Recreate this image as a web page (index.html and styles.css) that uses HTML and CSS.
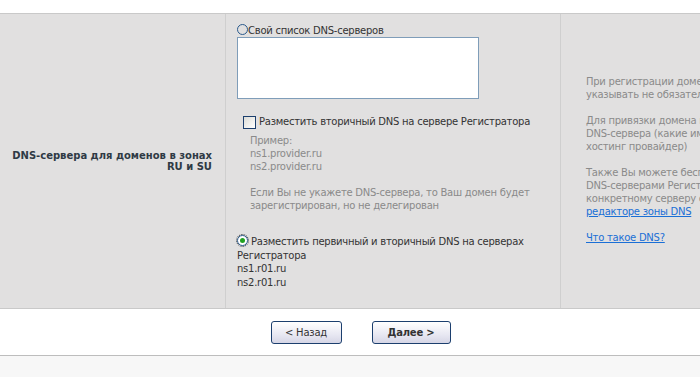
FILE: index.html
```
<!DOCTYPE html>
<html lang="ru">
<head>
<meta charset="utf-8">
<link rel="stylesheet" href="styles.css">
</head>
<body>
<div class="page">
  <div class="top"></div>
  <div class="form-row">
    <div class="label-cell">
      <b>DNS-сервера для доменов в зонах<br>RU и SU</b>
    </div>
    <div class="main-cell">
      <div class="opt"><span class="radio"></span>Свой список DNS-серверов</div>
      <textarea class="dns-list"></textarea>
      <div class="check-row"><span class="checkbox"></span>Разместить вторичный DNS на сервере Регистратора</div>
      <div class="hint">Пример:<br>ns1.provider.ru<br>ns2.provider.ru<br><br>Если Вы не укажете DNS-сервера, то Ваш домен будет<br>зарегистрирован, но не делегирован</div>
      <div class="opt2"><span class="radio checked"><span class="dot"></span></span>Разместить первичный и вторичный DNS на серверах<br>Регистратора<br>ns1.r01.ru<br>ns2.r01.ru</div>
    </div>
    <div class="info-cell">
      <p>При регистрации домена DNS-сервера<br>указывать не обязательно</p>
      <p>Для привязки домена к хостингу необходимо указать<br>DNS-сервера (какие именно, Вам подскажет Ваш<br>хостинг провайдер)</p>
      <p>Также Вы можете бесплатно воспользоваться<br>DNS-серверами Регистратора и привязать домен к<br>конкретному серверу с помощью записей в<br><a href="#">редакторе зоны DNS</a></p>
      <p><a href="#">Что такое DNS?</a></p>
    </div>
  </div>
  <div class="buttons">
    <button class="btn">&lt; Назад</button>
    <button class="btn btn-next">Далее &gt;</button>
  </div>
  <div class="footer"></div>
</div>
</body>
</html>
```
FILE: styles.css
```
html, body {
  margin: 0;
  padding: 0;
  background: #f7f7f7;
  overflow: hidden;
}
body {
  font-family: "DejaVu Sans", Verdana, sans-serif;
  font-size: 10px;
  line-height: 13px;
  letter-spacing: -0.25px;
  color: #333;
}
.page {
  width: 700px;
  height: 377px;
  overflow: hidden;
}
.top {
  height: 13px;
  background: #fff;
}
.form-row {
  display: grid;
  grid-template-columns: 226px 335px 320px;
  width: 881px;
  height: 294px;
  background: #e1e0e0;
  border-top: 1px solid #c9c9c9;
  border-bottom: 1px solid #c9c9c9;
}
.label-cell {
  border-right: 1px solid #cfcfcf;
  display: flex;
  align-items: center;
  justify-content: flex-end;
  text-align: right;
  padding: 0 13px 0 8px;
  line-height: 11px;
  font-size: 10px;
  letter-spacing: 0;
}
.label-cell b {
  font-weight: bold;
  color: #2f3a45;
}
.main-cell {
  border-right: 1px solid #cfcfcf;
  padding: 10px 12px 0 11px;
}
.opt {
  height: 13px;
  line-height: 13px;
}
.radio {
  display: inline-block;
  width: 9px;
  height: 9px;
  border: 1px solid #2a5a8c;
  border-radius: 50%;
  background: transparent;
  vertical-align: -1px;
  position: relative;
}
.radio.checked {
  background: #fff;
  outline: 1px dotted #333;
  outline-offset: 0px;
  margin-right: 3px;
}
.radio .dot {
  position: absolute;
  left: 2px;
  top: 2px;
  width: 5px;
  height: 5px;
  border-radius: 50%;
  background: #21a121;
}
.dns-list {
  display: block;
  box-sizing: border-box;
  width: 242px;
  height: 62px;
  margin: 0;
  border: 1px solid #7f9db9;
  background: #fff;
  resize: none;
  padding: 0;
}
.check-row {
  margin: 16px 0 0 6px;
  height: 14px;
  line-height: 14px;
  display: flex;
  align-items: center;
}
.checkbox {
  display: inline-block;
  width: 11px;
  height: 11px;
  border: 1px solid #1c3f6e;
  background: linear-gradient(135deg, #dcdcd7, #fff);
  margin-right: 3px;
}
.hint {
  color: #8a8a8a;
  margin: 5px 0 0 13px;
}
.opt2 {
  margin-top: 23px;
  line-height: 13.7px;
}
.info-cell {
  align-self: center;
  padding: 0 0 4px 25px;
  color: #8a8a8a;
  white-space: nowrap;
}
.info-cell p {
  margin: 0 0 13px 0;
}
.info-cell p:last-child {
  margin-bottom: 0;
}
.info-cell a {
  color: #1a6fd6;
  text-decoration: underline;
}
.buttons {
  height: 46px;
  background: #fff;
  border-bottom: 1px solid #bdbdbd;
  display: flex;
  justify-content: center;
  align-items: center;
  gap: 30px;
  padding-left: 21px;
}
.btn {
  height: 23px;
  border: 1px solid #1c3f6e;
  border-radius: 3px;
  background: linear-gradient(#ffffff, #e8e8f2 60%, #d6d6e6);
  font-family: "DejaVu Sans", Verdana, sans-serif;
  font-size: 10px;
  letter-spacing: -0.2px;
  color: #333;
  padding: 0;
  width: 71px;
}
.btn-next {
  width: 79px;
  font-weight: bold;
}
.footer {
  background: #f7f7f7;
  height: 30px;
}
```
